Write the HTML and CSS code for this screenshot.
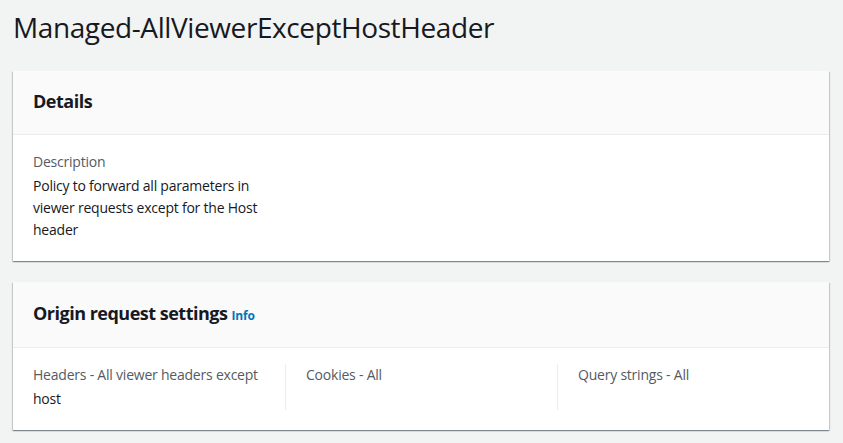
FILE: index.html
```html
<!DOCTYPE html>
<html>
<head>
<meta charset="utf-8">
<link rel="stylesheet" href="styles.css">
</head>
<body>
<div class="page">
  <h1 class="title">Managed-AllViewerExceptHostHeader</h1>
  <section class="card">
    <div class="card-header"><h2 class="card-title">Details</h2></div>
    <div class="card-body cols">
      <div class="col">
        <div class="label">Description</div>
        <div class="value">Policy to forward all parameters in viewer requests except for the Host header</div>
      </div>
    </div>
  </section>
  <section class="card">
    <div class="card-header tall"><h2 class="card-title">Origin request settings <a class="info" href="#">Info</a></h2></div>
    <div class="card-body cols">
      <div class="col">
        <div class="label">Headers - All viewer headers except</div>
        <div class="value">host</div>
      </div>
      <div class="col divided">
        <div class="label">Cookies - All</div>
      </div>
      <div class="col divided">
        <div class="label">Query strings - All</div>
      </div>
    </div>
  </section>
</div>
</body>
</html>
```
FILE: styles.css
```css
* { box-sizing: border-box; }
html, body { margin: 0; padding: 0; }
body {
  background: #f2f3f3;
  font-family: "Open Sans", "Noto Sans", Arial, sans-serif;
  color: #16191f;
  font-size: 14px;
  letter-spacing: -0.22px;
}
.page {
  padding: 9px 14px 0 13px;
  width: 843px;
}
.title {
  margin: 0 0 26px 0;
  font-size: 28px;
  line-height: 36px;
  font-weight: 400;
  color: #16191f;
  letter-spacing: -0.4px;
}
.card {
  width: 816px;
  background: #fff;
  margin-bottom: 21px;
  box-shadow: 0 1px 1px 0 rgba(0,28,36,0.3), 1px 1px 1px 0 rgba(0,28,36,0.15), -1px 1px 1px 0 rgba(0,28,36,0.15);
}
.card-header {
  background: #fafafa;
  border-bottom: 1px solid #eaeded;
  padding: 18px 20px 21px 20px;
}
.card-header.tall { padding: 19px 20px 22px 20px; }
.card-title {
  margin: 0;
  font-size: 18px;
  line-height: 24px;
  font-weight: 700;
  color: #16191f;
  letter-spacing: -0.5px;
}
.info {
  color: #0073bb;
  font-size: 12px;
  line-height: 1;
  font-weight: 700;
  text-decoration: none;
  letter-spacing: -0.2px;
}
.card-body { padding: 16px 0 20px 0; }
.cols {
  display: grid;
  grid-template-columns: repeat(3, 272px);
}
.col { padding: 0 20px; }
.divided { border-left: 1px solid #eaeded; }
.label {
  color: #545b64;
  line-height: 22px;
  margin-bottom: 2px;
}
.value {
  line-height: 22px;
  color: #16191f;
}
```
